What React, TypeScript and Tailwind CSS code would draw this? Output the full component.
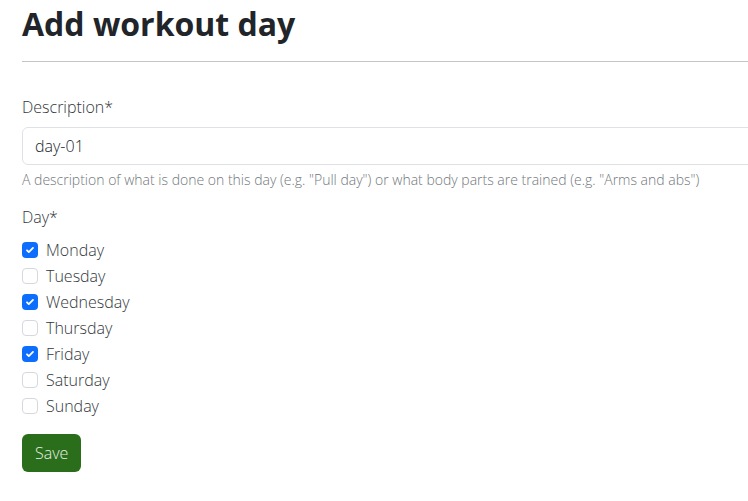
import React, { useState } from "react";

const days = ["Monday", "Tuesday", "Wednesday", "Thursday", "Friday", "Saturday", "Sunday"];

const App: React.FC = () => {
  const [description, setDescription] = useState("day-01");
  const [checked, setChecked] = useState<Record<string, boolean>>({
    Monday: true,
    Wednesday: true,
    Friday: true,
  });

  const toggle = (day: string) => {
    setChecked((prev) => ({ ...prev, [day]: !prev[day] }));
  };

  return (
    <div
      className="w-[748px] h-[501px] overflow-hidden bg-white text-[#33373b] font-light"
      style={{ fontFamily: '"Open Sans", "Liberation Sans", sans-serif' }}
    >
      <div className="w-[800px] pl-[22px] pt-[5px]">
        {/* Title */}
        <h1 className="text-[32px] font-bold leading-[38px] text-[#212529]">Add workout day</h1>
        <hr className="mt-[18px] border-t border-[#c6c6c6]" />

        {/* Description */}
        <label className="block mt-[33px] text-base leading-6">Description*</label>
        <input
          value={description}
          onChange={(e) => setDescription(e.target.value)}
          className="mt-[8px] block w-full h-[38px] px-[12px] rounded-[6px] border border-[#dee2e6] text-base text-[#212529] font-light outline-none"
        />
        <p className="mt-[4px] text-[14px] leading-[21px] text-[#72777c]">
          A description of what is done on this day (e.g. "Pull day") or what body parts are trained (e.g. "Arms and abs")
        </p>

        {/* Days */}
        <div className="mt-[15px] text-base leading-6">Day*</div>
        <div className="mt-[8px] flex flex-col">
          {days.map((day) => (
            <label key={day} className="flex items-center h-[26px] cursor-pointer">
              <span
                onClick={() => toggle(day)}
                className={
                  checked[day]
                    ? "w-4 h-4 rounded-[4px] bg-[#0d6efd] flex items-center justify-center"
                    : "w-4 h-4 rounded-[4px] border border-[#d5d8dc] bg-white"
                }
              >
                {checked[day] && (
                  <svg width="12" height="12" viewBox="0 0 20 20" fill="none">
                    <path d="M5 10.5l3 3 7-7" stroke="white" strokeWidth="3" strokeLinecap="round" strokeLinejoin="round" />
                  </svg>
                )}
              </span>
              <span className="ml-[8px] text-base">{day}</span>
            </label>
          ))}
        </div>

        <button className="mt-[15px] h-[38px] px-[13px] rounded-[6px] bg-[#2a6e1b] text-[#e8f0e6] text-base font-light">
          Save
        </button>
      </div>
    </div>
  );
};

export default App;
